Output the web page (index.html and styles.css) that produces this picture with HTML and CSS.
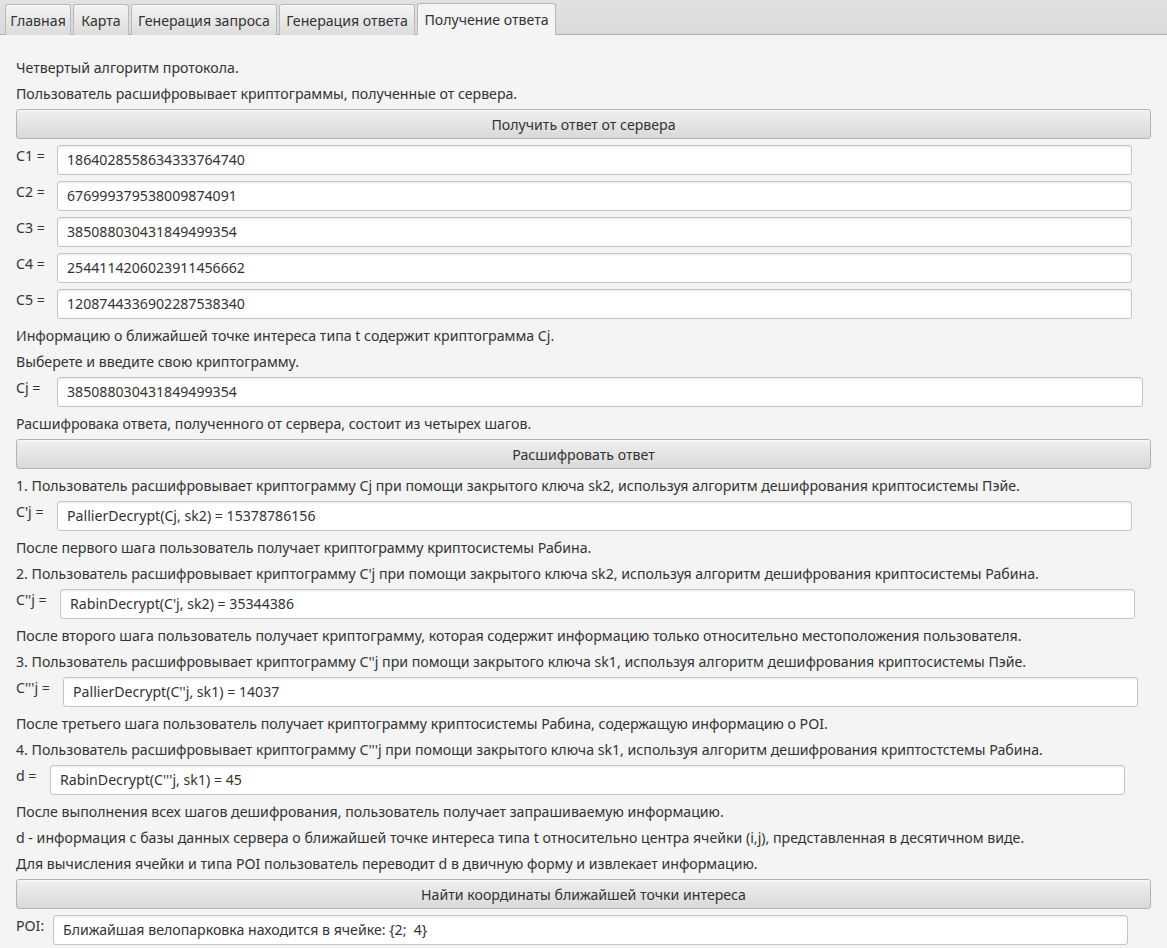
FILE: index.html
```html
<!DOCTYPE html>
<html lang="ru">
<head>
    <meta charset="UTF-8">
    <title>Получение ответа</title>
    <link rel="stylesheet" href="styles.css">
</head>
<body>

    <!-- вкладки -->
    <div class="tab-header">
        <div class="tab tab-main">Главная</div>
        <div class="tab tab-map">Карта</div>
        <div class="tab tab-req">Генерация запроса</div>
        <div class="tab tab-resp">Генерация ответа</div>
        <div class="tab tab-get selected">Получение ответа</div>
    </div>

    <div class="content">
        <p class="line">Четвертый алгоритм протокола.</p>
        <p class="line">Пользователь расшифровывает криптограммы, полученные от сервера.</p>
        <button class="btn">Получить ответ от сервера</button>

        <div class="row"><span class="lbl">C1 =</span><div class="field">1864028558634333764740</div></div>
        <div class="row"><span class="lbl">C2 =</span><div class="field">676999379538009874091</div></div>
        <div class="row"><span class="lbl">C3 =</span><div class="field">385088030431849499354</div></div>
        <div class="row"><span class="lbl">C4 =</span><div class="field">2544114206023911456662</div></div>
        <div class="row"><span class="lbl">C5 =</span><div class="field">1208744336902287538340</div></div>

        <p class="line">Информацию о ближайшей точке интереса типа t содержит криптограмма Cj.</p>
        <p class="line">Выберете и введите свою криптограмму.</p>
        <div class="row"><span class="lbl">Cj =</span><div class="field wide">385088030431849499354</div></div>

        <p class="line">Расшифровака ответа, полученного от сервера, состоит из четырех шагов.</p>
        <button class="btn">Расшифровать ответ</button>

        <p class="line">1. Пользователь расшифровывает криптограмму Cj при помощи закрытого ключа sk2, используя алгоритм дешифрования криптосистемы Пэйе.</p>
        <div class="row"><span class="lbl">C'j =</span><div class="field">PallierDecrypt(Cj, sk2) = 15378786156</div></div>
        <p class="line">После первого шага пользователь получает криптограмму криптосистемы Рабина.</p>

        <p class="line">2. Пользователь расшифровывает криптограмму C'j при помощи закрытого ключа sk2, используя алгоритм дешифрования криптосистемы Рабина.</p>
        <div class="row"><span class="lbl lbl-2">C''j =</span><div class="field">RabinDecrypt(C'j, sk2) = 35344386</div></div>
        <p class="line">После второго шага пользователь получает криптограмму, которая содержит информацию только относительно местоположения пользователя.</p>

        <p class="line">3. Пользователь расшифровывает криптограмму C''j при помощи закрытого ключа sk1, используя алгоритм дешифрования криптосистемы Пэйе.</p>
        <div class="row"><span class="lbl lbl-3">C'''j =</span><div class="field">PallierDecrypt(C''j, sk1) = 14037</div></div>
        <p class="line">После третьего шага пользователь получает криптограмму криптосистемы Рабина, содержащую информацию о POI.</p>

        <p class="line">4. Пользователь расшифровывает криптограмму C'''j при помощи закрытого ключа sk1, используя алгоритм дешифрования криптостстемы Рабина.</p>
        <div class="row"><span class="lbl lbl-d">d =</span><div class="field">RabinDecrypt(C'''j, sk1) = 45</div></div>

        <p class="line">После выполнения всех шагов дешифрования, пользователь получает запрашиваемую информацию.</p>
        <p class="line">d - информация с базы данных сервера о ближайшей точке интереса типа t относительно центра ячейки (i,j), представленная в десятичном виде.</p>
        <p class="line">Для вычисления ячейки и типа POI пользователь переводит d в двичную форму и извлекает информацию.</p>
        <button class="btn">Найти координаты ближайшей точки интереса</button>
        <div class="row"><span class="lbl lbl-poi">POI:</span><div class="field">Ближайшая велопарковка находится в ячейке: {2;&nbsp; 4}</div></div>
    </div>

</body>
</html>
```

FILE: styles.css
```css
/* основа */
body {
    margin: 0;
    background-color: #f4f4f4;
    font-family: 'Noto Sans', 'Open Sans', sans-serif;
    font-size: 14.15px;
    color: #333333;
}

/* вкладки */
.tab-header {
    display: flex;
    height: 35px;
    padding-left: 5px;
    box-sizing: border-box;
    align-items: flex-end;
    background: linear-gradient(#e2e2e2, #d9d9d9);
    border-bottom: 1px solid #b0b0b0;
}

.tab {
    height: 31px;
    box-sizing: border-box;
    margin-right: 2px;
    margin-bottom: -1px;
    display: flex;
    align-items: center;
    justify-content: center;
    border: 1px solid #b8b8b8;
    border-bottom: none;
    border-radius: 3px 3px 0 0;
    background: linear-gradient(#f3f3f3, #dcdcdc);
    box-shadow: inset 0 1px 0 #fbfbfb;
}

.tab-main { width: 66px; }
.tab-map { width: 56px; }
.tab-req { width: 146px; }
.tab-resp { width: 136px; }
.tab-get { width: 139px; }

.tab.selected {
    height: 32px;
    background: #f4f4f4;
    box-shadow: none;
}

/* содержимое */
.content {
    padding: 22px 16px 0 16px;
    width: 1135px;
}

.line {
    margin: 0;
    height: 26px;
    line-height: 22px;
}

.btn {
    display: block;
    width: 1135px;
    height: 30px;
    margin: 0 0 6px 0;
    border: 1px solid #b3b3b3;
    border-radius: 3px;
    background: linear-gradient(#f0f0f0, #d9d9d9);
    box-shadow: inset 0 1px 0 #fafafa;
    font-family: inherit;
    font-size: inherit;
    color: #333333;
    padding: 0;
}

.row {
    display: flex;
    height: 30px;
    margin-bottom: 6px;
}

.lbl {
    width: 41px;
    flex: none;
    line-height: 22px;
}

.lbl-2 { width: 44px; }
.lbl-3 { width: 47px; }
.lbl-d { width: 34px; }
.lbl-poi { width: 37px; }

.field {
    width: 1075px;
    height: 30px;
    box-sizing: border-box;
    padding: 0 9px;
    line-height: 28px;
    background: #ffffff;
    border: 1px solid #c4c4c4;
    border-radius: 3px;
    box-shadow: inset 0 2px 2px -1px #e8e8e8;
    white-space: nowrap;
}

.field.wide {
    width: 1086px;
}
```
